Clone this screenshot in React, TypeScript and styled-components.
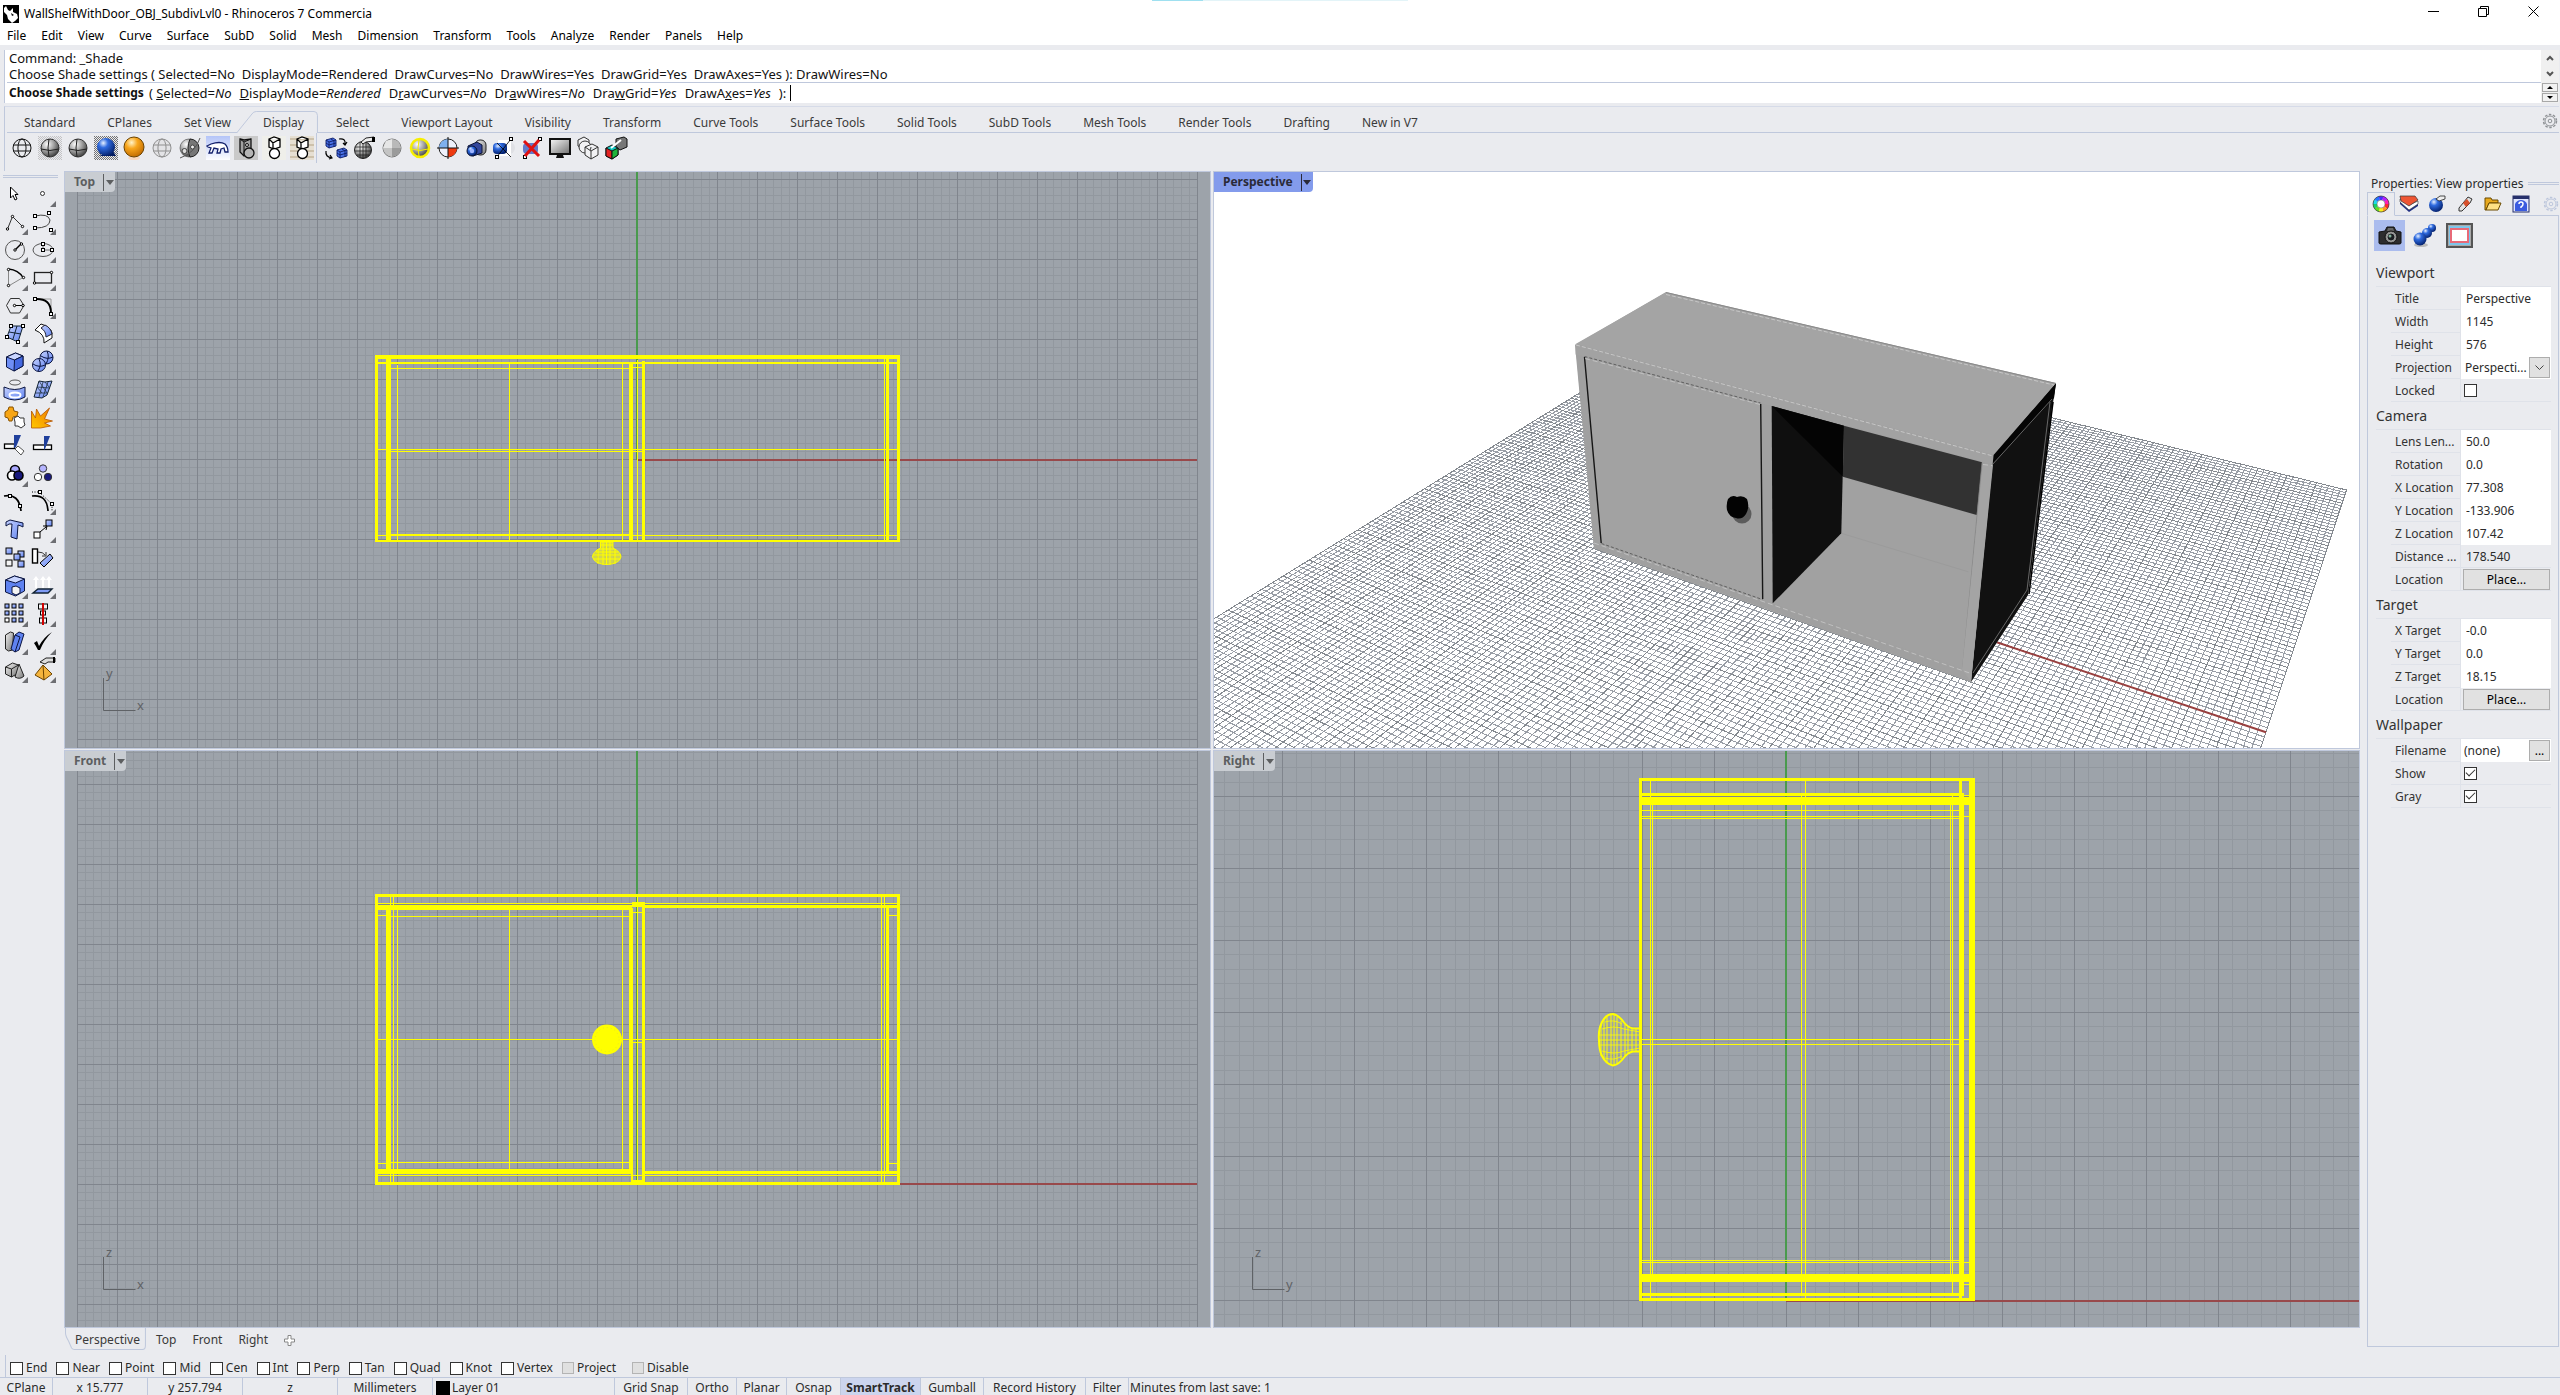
import React from "react";
import styled, { createGlobalStyle, css } from "styled-components";

const GlobalStyle = createGlobalStyle`
  *, *::before, *::after { box-sizing: border-box; }
  html, body { margin: 0; padding: 0; height: 100%; }
  body { overflow: hidden; background: #eaebef; }
  body, button, input, select {
    font-family: "Noto Sans", "Open Sans", sans-serif;
    font-size: 12px;
    line-height: 16px;
    color: #2b2b2b;
  }
  button { margin: 0; padding: 0; border: 0; background: none; }
  svg { display: block; }
`;

const LINE = "#bfc8dc";

/* ---------- frame ---------- */

const Window = styled.div`
  display: flex;
  flex-direction: column;
  height: 100vh;
  background: #eaebef;
  white-space: nowrap;
`;

const TitleBar = styled.header`
  position: relative;
  display: flex;
  align-items: center;
  height: 27px;
  padding: 0 2px 0 3px;
  background: #fff;
  color: #000;
`;

const TitleText = styled.h1`
  flex: 1;
  margin: 0 0 0 5px;
  font-size: 12px;
  font-weight: 400;
  line-height: 16px;
`;

const ShareStrip = styled.span`
  position: absolute;
  top: 0;
  left: 45%;
  width: 10%;
  height: 1px;
  background: linear-gradient(90deg, #9fe0f0 20%, #e3f4f8 20%);
`;

const CaptionButton = styled.button`
  display: grid;
  align-self: flex-start;
  place-items: center;
  width: 50px;
  height: 22px;
`;

const MenuBar = styled.nav`
  display: flex;
  height: 18px;
  background: #fff;
`;

const MenuItem = styled.button`
  padding: 0 8px 0 7px;
  color: #000;
`;

/* ---------- command area ---------- */

const CommandArea = styled.section`
  display: grid;
  grid-template-columns: 1fr 18px;
  height: 53px;
  margin: 5px 1px 0 4px;
  padding-left: 2px;
  border-left: 1px solid ${LINE};
  background: #fff;
  color: #111;
`;

const CommandText = styled.div`
  display: flex;
  flex-direction: column;
`;

const History = styled.div`
  height: 33px;
  padding-left: 2px;
  border-bottom: 1px solid ${LINE};
  font-size: 13px;
  p { margin: 0; line-height: 16px; }
`;

const Prompt = styled.div`
  display: flex;
  align-items: center;
  height: 20px;
  padding-left: 2px;
  font-size: 13px;
  b { margin-right: 5px; font-size: 12px; }
`;

const PromptOption = styled.button`
  margin-right: 8px;
  color: inherit;
  font-size: 13px;
`;

const PromptLabel = styled.label`
  display: flex;
  align-items: center;
`;

const PromptInput = styled.input`
  width: 200px;
  height: 16px;
  margin-left: 4px;
  padding: 0;
  border: 0;
  border-left: 1px solid #000;
  outline: 0;
`;

const CommandScroll = styled.div`
  display: flex;
  flex-direction: column;
  background: #f0f0f0;
`;

const ScrollButton = styled.button`
  display: grid;
  place-items: center;
  height: 16px;
`;

const SpinButton = styled.button`
  display: grid;
  place-items: center;
  height: 9px;
  margin: 1px 1px 0 1px;
  border: 1px solid #a8a8a8;
  background: #f2f2f2;
`;

/* ---------- toolbar tabs ---------- */

const ToolbarArea = styled.section`
  height: 65px;
  margin: 3px 1px 0 4px;
  padding-left: 2px;
  border-top: 1px solid #d6dbe8;
  border-left: 1px solid ${LINE};
`;

const TabStrip = styled.div`
  position: relative;
  display: flex;
  align-items: flex-end;
  height: 26px;
  padding-left: 17px;
  border-bottom: 1px solid ${LINE};
`;

const ToolTab = styled.button<{ $active?: boolean }>`
  position: relative;
  height: 21px;
  margin-right: 32px;
  padding-top: 2px;
  color: #3a3a3a;
  z-index: 1;
`;

const ActiveTabShape = styled.svg`
  position: absolute;
  z-index: -1;
  left: -26px;
  bottom: -1px;
  width: calc(100% + 40px);
  height: 22px;
`;

const TabSettings = styled.button`
  margin: 0 1px 3px auto;
`;

const ToolRow = styled.div`
  display: flex;
  align-items: center;
  height: 30px;
  padding-left: 1px;
`;

const ToolButton = styled.button`
  width: 28px;
  height: 28px;
  display: grid;
  place-items: center;
`;

const ToolDivider = styled.span`
  width: 6px;
  height: 30px;
  border-left: 1px solid ${LINE};
`;

/* ---------- workspace ---------- */

const Workspace = styled.main`
  flex: 1;
  min-height: 0;
  display: grid;
  grid-template-columns: 64px minmax(0, 1fr) 200px;
`;

const SideTools = styled.aside`
  padding-top: 4px;
`;

const Grip = styled.div`
  height: 3px;
  margin: 0 6px 1px 3px;
  border: solid ${LINE};
  border-width: 1px 0;
`;

const SideGrid = styled.div`
  display: grid;
  grid-template-columns: 28px 28px;
`;

const Center = styled.div`
  display: flex;
  flex-direction: column;
  min-width: 0;
  min-height: 0;
`;

const Viewports = styled.div`
  flex: 1;
  min-height: 0;
  display: grid;
  grid-template-columns: 1fr 1fr;
  grid-template-rows: 1fr 1fr;
  gap: 1px 2px;
`;

const Pane = styled.section<{ $white?: boolean }>`
  position: relative;
  min-width: 0;
  min-height: 0;
  border: 1px solid ${LINE};
  background: ${(p) => (p.$white ? "#fff" : "#9da3aa")};
`;

const Scene = styled.svg`
  width: 100%;
  height: 100%;
  font-family: "Noto Sans", sans-serif;
`;

const PaneTitle = styled.button<{ $active?: boolean }>`
  position: absolute;
  left: 0;
  top: 0;
  display: flex;
  align-items: center;
  height: 20px;
  padding-left: 9px;
  border-bottom-right-radius: 4px;
  background: ${(p) => (p.$active ? "#839bec" : "#c9cdd2")};
  color: ${(p) => (p.$active ? "#2a2a38" : "#5c5e60")};
  font-weight: 700;
`;

const PaneArrow = styled.span`
  display: grid;
  place-items: center;
  width: 12px;
  height: 17px;
  margin-left: 8px;
  border-left: 1px solid currentColor;
`;

const PaneTabs = styled.div`
  position: relative;
  display: flex;
  align-items: center;
  height: 27px;
  padding: 0 0 3px 1px;
`;

const PaneTab = styled.button`
  position: relative;
  padding: 0 6px 0 10px;
  color: #3a3a3a;
`;

const PaneTabShape = styled.svg`
  position: absolute;
  left: 0;
  top: -4px;
  width: 100%;
  height: 22px;
`;

/* ---------- properties ---------- */

const Properties = styled.aside`
  display: flex;
  flex-direction: column;
  padding: 4px 1px 8px 7px;
`;

const PanelTitle = styled.h2`
  display: flex;
  align-items: center;
  gap: 5px;
  height: 17px;
  margin: 0 0 0 4px;
  font-size: 12px;
  font-weight: 400;
  line-height: 16px;
  &::after {
    content: "";
    flex: 1;
    height: 3px;
    border: solid ${LINE};
    border-width: 1px 0;
  }
`;

const PanelTabs = styled.div`
  display: flex;
  height: 24px;
`;

const PanelTab = styled.button<{ $active?: boolean }>`
  display: grid;
  place-items: center;
  width: 28px;
  border-bottom: 1px solid ${LINE};
  ${(p) =>
    p.$active &&
    css`
      border: 1px solid ${LINE};
      border-bottom-color: transparent;
    `}
`;

const PanelTabEnd = styled.div`
  flex: 1;
  display: flex;
  justify-content: flex-end;
  align-items: center;
  border-bottom: 1px solid ${LINE};
`;

const PanelBody = styled.div`
  flex: 1;
  padding: 4px 7px 0 8px;
  border: solid ${LINE};
  border-width: 0 1px 1px 1px;
`;

const PageButtons = styled.div`
  display: flex;
  gap: 4px;
  padding: 0 0 7px 0;
  margin-left: -2px;
`;

const PageButton = styled.button<{ $active?: boolean }>`
  display: grid;
  place-items: center;
  width: 31px;
  height: 31px;
  background: ${(p) => (p.$active ? "#abbcee" : "transparent")};
`;

const SectionTitle = styled.h3`
  margin: 0;
  height: 28px;
  font-size: 14px;
  font-weight: 400;
  line-height: 29px;
  color: #333;
`;

const Rows = styled.div`
  border-top: 1px solid #dfe2e9;
  margin-bottom: -1px;
`;

const Row = styled.div`
  display: grid;
  grid-template-columns: 70px minmax(0, 1fr);
  height: 23px;
  margin-left: 15px;
  border-bottom: 1px solid #dfe2e9;
`;

const RowLabel = styled.label`
  padding-left: 4px;
  line-height: 23px;
  border-right: 1px solid #dfe2e9;
  color: #333;
`;

const RowValue = styled.div<{ $plain?: boolean }>`
  display: flex;
  align-items: center;
  min-width: 0;
  background: ${(p) => (p.$plain ? "transparent" : "#fff")};
`;

const Field = styled.input<{ $tight?: boolean }>`
  flex: 1;
  min-width: 0;
  height: 22px;
  padding: 0 0 0 ${(p) => (p.$tight ? 3 : 5)}px;
  border: 0;
  outline: 0;
  background: transparent;
`;

const Choice = styled.select`
  flex: 1;
  min-width: 0;
  height: 22px;
  padding: 0 0 0 4px;
  border: 0;
  outline: 0;
  appearance: none;
  background: transparent;
`;

const PlaceButton = styled.button`
  flex: 1;
  height: 21px;
  margin: 0 1px 0 2px;
  border: 1px solid #adadad;
  background: #e1e1e1;
  color: #000;
`;

const SmallButton = styled.button`
  display: grid;
  place-items: center;
  width: 21px;
  height: 21px;
  margin-right: 1px;
  border: 1px solid #adadad;
  background: #e1e1e1;
  color: #000;
`;

const CheckBox = styled.input`
  appearance: none;
  position: relative;
  width: 13px;
  height: 13px;
  margin: 0;
  border: 1px solid #333;
  background: #fff;
  &:disabled {
    width: 12px;
    height: 12px;
    border-color: #b4b4b4;
    background: #e0e0e0;
  }
  &:checked::after {
    content: "";
    position: absolute;
    left: 1px;
    top: 1px;
    width: 9px;
    height: 5px;
    border: solid #333;
    border-width: 0 0 1px 1px;
    transform: rotate(-45deg);
  }
`;

/* ---------- bottom bars ---------- */

const OsnapBar = styled.section`
  display: flex;
  align-items: center;
  height: 22px;
  padding: 4px 0 0 4px;
  margin-left: 5px;
  border-left: 1px solid ${LINE};
`;

const Osnap = styled.label<{ $wide?: boolean }>`
  display: flex;
  align-items: center;
  gap: 3px;
  margin-right: ${(p) => (p.$wide ? 16 : 9)}px;
`;

const StatusBar = styled.footer`
  display: flex;
  height: 18px;
  border-top: 1px solid ${LINE};
`;

const StatusCell = styled.button<{ $w: number; $on?: boolean; $left?: boolean }>`
  display: flex;
  align-items: center;
  justify-content: ${(p) => (p.$left ? "flex-start" : "center")};
  gap: 2px;
  width: ${(p) => p.$w}px;
  padding: 3px 0 0 ${(p) => (p.$left ? 3 : 0)}px;
  border-right: 1px solid ${LINE};
  background: ${(p) => (p.$on ? "#ccd5ee" : "transparent")};
  font-weight: ${(p) => (p.$on ? 700 : 400)};
`;

const StatusNote = styled.span`
  padding: 2px 0 0 1px;
`;

const Swatch = styled.span`
  width: 14px;
  height: 14px;
  background: #000;
`;

const Hidden = styled.svg`
  position: absolute;
  width: 0;
  height: 0;
`;

/* ---------- shared gradients ---------- */

const Gradients = () => (
  <Hidden aria-hidden="true">
    <defs>
      <radialGradient id="gGray" cx="35%" cy="30%" r="75%">
        <stop offset="0" stopColor="#fff" />
        <stop offset=".5" stopColor="#a0a0a0" />
        <stop offset="1" stopColor="#3a3a3a" />
      </radialGradient>
      <radialGradient id="gBlue" cx="35%" cy="28%" r="75%">
        <stop offset="0" stopColor="#e6f0ff" />
        <stop offset=".35" stopColor="#2f6be0" />
        <stop offset="1" stopColor="#03206c" />
      </radialGradient>
      <radialGradient id="gOrange" cx="38%" cy="28%" r="75%">
        <stop offset="0" stopColor="#fff3c8" />
        <stop offset=".4" stopColor="#f8a61c" />
        <stop offset="1" stopColor="#c06a00" />
      </radialGradient>
      <linearGradient id="gSoft" x1="0" y1="0" x2="1" y2="1">
        <stop offset="0" stopColor="#c6d2ff" />
        <stop offset="1" stopColor="#5f82f0" />
      </linearGradient>
      <linearGradient id="gSky" x1="0" y1="0" x2="0" y2="1">
        <stop offset="0" stopColor="#b4c4f8" />
        <stop offset="1" stopColor="#fdfdff" />
      </linearGradient>
      <linearGradient id="gSteel" x1="0" y1="0" x2="1" y2="1">
        <stop offset="0" stopColor="#f2f2f2" />
        <stop offset="1" stopColor="#777" />
      </linearGradient>
      <linearGradient id="gFlame" x1="0" y1="1" x2="1" y2="0">
        <stop offset="0" stopColor="#ffc800" />
        <stop offset="1" stopColor="#f07800" />
      </linearGradient>
      <pattern id="pDots" width="2" height="2" patternUnits="userSpaceOnUse">
        <rect width="1" height="1" fill="#a9a9a9" />
        <rect x="1" y="1" width="1" height="1" fill="#a9a9a9" />
      </pattern>
      <pattern id="pDotsDark" width="2" height="2" patternUnits="userSpaceOnUse">
        <rect width="1" height="1" fill="#555" />
        <rect x="1" y="1" width="1" height="1" fill="#555" />
      </pattern>
    </defs>
  </Hidden>
);

/* ---------- icon helpers ---------- */

const Globe = ({ fill = "none", stroke = "#111", r = 9, cx = 12, cy = 12 }) => (
  <g fill="none" stroke={stroke}>
    <circle cx={cx} cy={cy} r={r} fill={fill} />
    <ellipse cx={cx} cy={cy} rx={r * 0.45} ry={r} />
    <path d={`M${cx - r} ${cy - 3}h${2 * r}M${cx - r} ${cy + 3}h${2 * r}`} />
  </g>
);

const HalfSphere = ({ cx = 12, cy = 12, r = 9 }) => (
  <g>
    <circle cx={cx} cy={cy} r={r} fill="url(#gGray)" stroke="#333" />
    <path d={`M${cx - r} ${cy + 1}q${r} 3 ${2 * r} 0M${cx - 1} ${cy - r}q-2 ${r} 0 ${2 * r}`} fill="none" stroke="#222" />
  </g>
);

const Node = ({ x, y, s = 3 }: { x: number; y: number; s?: number }) => (
  <rect x={x - s / 2} y={y - s / 2} width={s} height={s} fill="#fff" stroke="#000" />
);

const Dot = ({ x, y }: { x: number; y: number }) => <circle cx={x} cy={y} r="1.2" fill="#fff" stroke="#000" />;

const BoxOverCircle = () => (
  <g fill="none" stroke="#000" strokeWidth="1.3">
    <path d="M7 3l5-2 6 2v8l-6 2-5-2zM7 3l4 4 7-4M11 7v5" fill="#fff" />
    <circle cx="12.5" cy="17.500" r="5" fill="#fff" />
  </g>
);

const MiniCube = ({ x, y }: { x: number; y: number }) => (
  <g transform={`translate(${x} ${y})`} stroke="#0c1c66" strokeLinejoin="round" strokeWidth=".9">
    <path d="M1 3l7-2 3 2v6l-7 2-3-2z" fill="#4a72e8" />
    <path d="M1 3l3 2 7-2M4 5v6M1 6l3 2 7-2M6 2l3 2v6" fill="none" />
  </g>
);

/* ---------- display toolbar, 24 x 24 drawings ---------- */

const displayIcons: [string, React.ReactNode][] = [
  ["Wireframe", <Globe />],
  ["Shaded", <><rect width="24" height="24" fill="url(#pDots)" opacity=".6" /><HalfSphere /></>],
  ["Shade", <HalfSphere />],
  ["Rendered", <><rect width="24" height="24" fill="url(#pDotsDark)" opacity=".8" /><path d="M5 20h17l-3-5z" fill="#001a60" /><circle cx="12" cy="11" r="9" fill="url(#gBlue)" /></>],
  ["Raytraced", <><ellipse cx="12" cy="22" rx="6" ry="2" fill="#f9d9c0" /><circle cx="12" cy="11" r="10" fill="url(#gOrange)" stroke="#6b4300" /></>],
  ["Ghosted", <Globe stroke="#8f8f8f" fill="#e3e3e6" />],
  ["X-ray", <><circle cx="11" cy="12" r="9" fill="url(#gGray)" stroke="#555" strokeWidth=".7" /><path d="M12 3a9 9 0 0 1 0 18q-4-9 0-18z" fill="#777" stroke="#222" /><circle cx="6.500" cy="15" r="2.500" fill="#ddd" stroke="#444" /><circle cx="14.500" cy="11" r="2" fill="#eee" stroke="#444" /><path d="M2 22Q17 17 22 2" fill="none" stroke="#555" /></>],
  ["Arctic", <><rect width="24" height="24" fill="url(#gSky)" /><path d="M1 10l4-2q9-3 14 0 3 3 3 8h-3l-1-4-3 1-1 4h-3l1-4-4-1-2 5H3l2-5-3-1z" fill="#fff" stroke="#13206c" strokeWidth="1.3" /></>],
  ["Technical", <><rect width="24" height="24" fill="#c9c9c9" /><path d="M6 3l4 1 7-1v13l-7 4-4-4z" fill="#a2a2a2" stroke="#111" strokeWidth="1.3" /><path d="M6 3l4 3v13M10 6l7-3" fill="none" stroke="#111" /><circle cx="15" cy="17" r="5" fill="#b5b5b5" stroke="#111" strokeWidth="1.3" /><circle cx="13" cy="9" r="1.5" fill="#ddd" stroke="#111" /></>],
  ["Artistic", <><rect width="24" height="24" fill="#efefea" /><BoxOverCircle /></>],
  ["Pen", <><rect width="24" height="24" fill="#e6dfd2" /><path d="M0 3h24M0 9h24M0 15h24M0 21h24" stroke="#cdc1ab" strokeWidth="2" /><BoxOverCircle /></>],
];

const shadeIcons: [string, React.ReactNode][] = [
  ["Synchronize display", <><MiniCube x={1} y={1} /><MiniCube x={12} y={11} /><path d="M15 3q7-1 6 5M19 7l2 2 2-3M2 15q-1 6 6 7M6 19l2 3-3 1" fill="none" stroke="#000" strokeWidth="1.2" /></>],
  ["Mesh settings", <><circle cx="11" cy="14" r="8.5" fill="url(#gGray)" stroke="#222" /><path d="M3 11h16M3 15h16M5 19h12M8 6v16M14 6v16M11 6v17" stroke="#222" strokeWidth=".8" /><path d="M9 6l5-4 8-1v4l-8 1-3 2z" fill="#eee" stroke="#222" /><path d="M20 1h3v5h-3z" fill="#000" /></>],
  ["Flat shade", <><circle cx="12" cy="12" r="9" fill="#b5b5b5" stroke="#777" /><path d="M6 5l6-2v9H3z" fill="#e6e6e6" /><path d="M12 12h9l-2 6-7 3z" fill="#9b9b9b" /><path d="M3 12h9v9q-8-2-9-9z" fill="#c4c4c4" /><path d="M12 3q8 1 9 9h-9z" fill="#b9b9b9" /></>],
  ["Shade selected", <><circle cx="12" cy="12" r="9" fill="url(#gGray)" stroke="#f6ee00" strokeWidth="2.5" /><path d="M4 13q8 3 16 0M11 4q-2 8 0 16" fill="none" stroke="#f6ee00" /></>],
  ["Clipping plane", <><circle cx="12" cy="12" r="9" fill="#eef1fb" stroke="#222" /><path d="M12 12V3a9 9 0 0 0-9 9z" fill="#7fb0ee" /><path d="M12 12v9a9 9 0 0 0 9-9z" fill="#ee3a10" /><path d="M12 1v22M1 12h22" stroke="#111" /></>],
  ["Capture view", <><rect x="11" y="4" width="11" height="15" rx="5" fill="url(#gSteel)" stroke="#222" /><path d="M4 10l9-4 5 3v8l-9 3-5-3z" fill="#34479c" stroke="#0b1335" /><circle cx="8" cy="15" r="5" fill="url(#gBlue)" stroke="#0b1335" /><circle cx="8" cy="15" r="2.2" fill="#9fb5ff" /></>],
  ["Clip on", <><circle cx="17" cy="12" r="6" fill="#dfe0e4" /><path d="M6 4h13v16H6z" fill="#fff" /><rect x="1" y="7" width="14" height="11" rx="4" fill="url(#gBlue)" /><path d="M4 22L19 3M5 7l14 14" stroke="#000" strokeWidth=".8" /><Node x={19} y={3} /><Node x={5} y={21} /></>],
  ["Clip off", <><rect x="3" y="7" width="15" height="11" rx="4" fill="#6279c9" /><path d="M4 22L20 2" stroke="#000" /><Node x={20} y={3} /><Node x={5} y={21} /><path d="M4 5l15 15M19 4L5 20" stroke="#e01010" strokeWidth="3" /></>],
  ["Full screen", <><rect x="1" y="2" width="22" height="17" fill="#111" /><rect x="3" y="4" width="18" height="13" fill="url(#gSteel)" /><path d="M9 19h6l1 3H8z" fill="#111" /></>],
  ["Draw order", <g fill="#f2f2f4" stroke="#333"><path d="M2 4l6-3 5 3v6l-5 3-6-3z" /><circle cx="9" cy="11" r="6" /><path d="M9 11l7-3 6 3v8l-7 4-6-4zM9 11l6 4 7-4M15 15v8" /></g>],
  ["Object display", <><path d="M12 3l8-2 3 2v8l-7 3-4-3z" fill="#777" stroke="#111" /><path d="M2 12l6-3 6 3v7l-6 4-6-3z" fill="#10c7c0" stroke="#111" /><path d="M2 12l6 3v8l-6-3z" fill="#e32222" stroke="#111" /><path d="M8 15l6-3v7l-6 4z" fill="#1fb43a" stroke="#111" /><path d="M7 12L17 4" stroke="#fff" strokeWidth="2" /></>],
];

/* ---------- side toolbar, 28 x 28 drawings ---------- */

type Side = [string, boolean, React.ReactNode];

const sq = (x: number, y: number, f = "url(#gSoft)", s = 6) => (
  <rect key={`${x}-${y}`} x={x} y={y} width={s} height={s} fill={f} stroke="#000" />
);

const sideIcons: Side[] = [
  ["Select", false, <path d="M10.500 8v11l2.500-2.500 2 4.500 2-1-2-4.500h3z" fill="#fff" stroke="#000" />],
  ["Point", true, <circle cx="14.500" cy="14.500" r="2" fill="#fff" stroke="#333" />],
  ["Polyline", true, <><path d="M7.500 22L12.500 9.500 22.500 19.500" fill="none" stroke="#333" /><Dot x={7.5} y={22} /><Dot x={12.5} y={9.5} /><Dot x={22.5} y={19.500} /></>],
  ["Curve", true, <><path d="M7 9q13-3 15 4 0 8-15 8" fill="none" stroke="#444" /><Node x={7} y={9} /><Node x={21} y={6} /><Node x={7} y={21} /><Node x={23} y={23} /></>],
  ["Circle", true, <><circle cx="15" cy="15" r="9.500" fill="none" stroke="#555" /><path d="M15 15l6-6" stroke="#000" strokeWidth="1.500" /><Dot x={15} y={15} /><Dot x={21.5} y={9} /></>],
  ["Ellipse", true, <><ellipse cx="15" cy="15" rx="10" ry="6.500" fill="none" stroke="#555" /><path d="M15 9v6h9" fill="none" stroke="#666" /><Node x={15} y={9} /><Node x={15} y={15} /><Node x={24} y={15} /></>],
  ["Arc", true, <><path d="M8.500 6v17L23 14.500" fill="none" stroke="#888" /><path d="M8.500 6q10 1 14.500 8.500" fill="none" stroke="#000" strokeWidth="1.400" /><Dot x={8.5} y={6.5} /><Dot x={8.5} y={22.500} /><Dot x={23.500} y={14.500} /></>],
  ["Rectangle", true, <><rect x="6.500" y="9.500" width="17" height="10.500" fill="none" stroke="#222" strokeWidth="1.300" /><Dot x={23.500} y={9.500} /><Dot x={6.500} y={20} /></>],
  ["Polygon", true, <><path d="M10.500 7.500h9l4.500 7-4.500 7.500h-9L6.500 14.500z" fill="none" stroke="#333" /><path d="M14.500 14.500h9" stroke="#000" /><Dot x={14.5} y={14.500} /><Dot x={23} y={14.500} /></>],
  ["Fillet", true, <><path d="M7 8h16v15" fill="none" stroke="#999" /><path d="M7 8q16-1 16 14" fill="none" stroke="#000" strokeWidth="2" /><Node x={7} y={8} /><Node x={23} y={23} /></>],
  ["Surface", true, <><path d="M11 7h12l-5 16-11-5z" fill="url(#gSoft)" stroke="#123" /><path d="M17 7l-4 13M9 13l12 2" stroke="#123" fill="none" /><Node x={11} y={7} /><Node x={23} y={7} /><Node x={7} y={18} /><Node x={18} y={23} /></>],
  ["Loft", true, <><path d="M7 11l6-6q10 3 11 9v5l-8 5q1-9-9-13z" fill="#fff" stroke="#111" /><path d="M13 9l4-3q6 3 7 9l-6 3q0-6-5-9z" fill="url(#gSoft)" stroke="#223" /></>],
  ["Box", true, <g stroke="#0a1440" strokeLinejoin="round"><path d="M6.500 10l9-4 7.500 3v10l-9 5-7.500-4z" fill="#6f8ff5" /><path d="M6.500 10l9-4 7.500 3-8.500 4z" fill="#c9d5ff" /><path d="M14.500 13L23 9v10l-9 5z" fill="#4468e0" /></g>],
  ["Boolean", true, <g fill="url(#gSoft)" stroke="#0a1440"><circle cx="18.500" cy="10.500" r="6.500" /><circle cx="11" cy="18" r="6.500" /><path d="M13 9q6 4 12 1M19 4q3 6-1 13M5 17q6 4 12 1M11 12q3 6-1 12" fill="none" /></g>],
  ["Project", true, <><ellipse cx="15" cy="7.500" rx="5.500" ry="2.500" fill="none" stroke="#555" /><path d="M4 12q11 5 21 0v10q-10 6-21 0z" fill="url(#gSoft)" stroke="#0a1440" /><ellipse cx="15" cy="20" rx="5.500" ry="2.500" fill="none" stroke="#fff" strokeWidth="2" /></>],
  ["Mesh", true, <><path d="M11 6l6 1 7-1-5 14-5 3-8-1z" fill="url(#gSoft)" stroke="#123" /><path d="M15 7l-4 15M20 7l-5 15M9 12l13 1M7 18l13 0M11 6l4 6M17 7l4 5M9 12l5 6M15 12l4 6" stroke="#234" strokeWidth=".8" fill="none" /></>],
  ["Join", false, <><path d="M5 9l3-2 1-3 4 0 1 4 4 1-1 4-4 1-1 4-3 0-1-3-3-1z" fill="#f7a514" stroke="#8a5300" /><path d="M14 15l4-2 2 2 4 0 0 4 1 3-4 3-3-2-3 0 0-4z" fill="#fff" stroke="#333" /></>],
  ["Explode", false, <path d="M3.500 8l4 7 1-9 4 7 9-8-5 11 8 2-8 2 6 3-10 2H3.500z" fill="url(#gFlame)" stroke="#b45500" strokeWidth=".8" />],
  ["Trim", false, <><rect x="4.500" y="13" width="10" height="4.500" fill="#fff" stroke="#000" strokeWidth="1.300" /><path d="M14 4h7l-5 12-2 1z" fill="#20409c" /><path d="M15 18l3-3 6 5-3 4z" fill="#fff" stroke="#555" /></>],
  ["Split", false, <><rect x="5.500" y="14" width="18" height="4.500" fill="#fff" stroke="#000" strokeWidth="1.300" /><path d="M16 5h6l-5 13-1 1z" fill="#20409c" /></>],
  ["Group", true, <g stroke="#000" strokeWidth="1.600"><circle cx="15" cy="11" r="4.500" fill="#a9a8ff" /><circle cx="12" cy="16.500" r="4.500" fill="#fff" /><circle cx="18.500" cy="16.500" r="4.500" fill="#19197c" /></g>],
  ["Ungroup", false, <g stroke="#333"><circle cx="15" cy="9.500" r="3.700" fill="#b5b4ff" /><circle cx="10" cy="18" r="3.700" fill="#fff" /><circle cx="20" cy="18" r="3.700" fill="#19197c" /></g>],
  ["Edit points", false, <><path d="M4 9q15-3 17 15" fill="none" stroke="#000" strokeWidth="1.700" /><Node x={10} y={9} /><Node x={20} y={19} /></>],
  ["Control points", true, <><path d="M4 9q15-2 16 15" fill="none" stroke="#000" strokeWidth="1.700" /><path d="M4 5h7l13 12v7" fill="none" stroke="#000" strokeDasharray="1 1.500" /><Node x={12} y={5} /><Node x={24} y={17} /></>],
  ["Text", false, <path d="M6 7l4-2 13 3v4l-2-1-3-1-1 14-6-2 1-13-3 0-3 2z" fill="url(#gSoft)" stroke="#0a1440" />],
  ["Move", true, <>{sq(18, 5)}{sq(6, 17, "#fff")}<path d="M12 17l6-5M15 11l4 0-1 4" fill="none" stroke="#000" /></>],
  ["Copy", false, <>{sq(6, 5)}{sq(18, 8)}{sq(14, 11)}{sq(6, 17, "#f4f4f4")}{sq(18, 18)}</>],
  ["Rotate", false, <><rect x="4.500" y="6" width="5" height="14" fill="#fff" stroke="#000" strokeWidth="1.400" /><path d="M10 9q5 0 7 3M18 9v4h-4" fill="none" stroke="#333" /><path d="M12 20l10-9 3 4-9 9z" fill="url(#gSoft)" stroke="#000" /></>],
  ["Solid edit", true, <g stroke="#0a1440" strokeLinejoin="round"><path d="M5.500 9l9-4 10 3v12l-9 5-10-4z" fill="#5f82f0" /><path d="M5.500 9l9-4 10 3-9 4z" fill="#c9d5ff" /><path d="M12 16l4-1 4 2v5l-4 2-4-2z" fill="#f4f4f4" /></g>],
  ["Extrude", true, <><path d="M8 17V8M15 17V8M21 17V8" stroke="#fff" strokeWidth="2" /><path d="M5 9l3-4 3 4zM12 9l3-4 3 4zM18 9l3-4 3 4z" fill="#fff" /><path d="M5 22l5-4h14l-4 4z" fill="#7f9bf5" stroke="#123" strokeWidth="1.400" /></>],
  ["Array", true, <>{[5, 12, 19].map((y) => [5, 12, 19].map((x) => sq(x, y, x === 5 && y === 19 ? "#fff" : "url(#gSoft)", 4)))}</>],
  ["Align", true, <><rect x="10.500" y="5" width="9" height="5" fill="#f4f4f4" stroke="#000" /><rect x="12.500" y="12" width="5" height="4" fill="#f4f4f4" stroke="#000" /><rect x="11.500" y="19" width="7" height="5" fill="#f4f4f4" stroke="#000" /><path d="M15 4v22" stroke="#d00000" strokeWidth="2" /></>],
  ["Bend", true, <><path d="M5.500 8l5-3 3 1-1 17-4 1-3-2z" fill="url(#gSteel)" stroke="#222" /><path d="M15 8l4-3 5 2-5 16-4 2-4-3z" fill="#5f82f0" stroke="#0a1440" /><path d="M15 8l5 2-5 15" fill="none" stroke="#0a1440" /></>],
  ["Check", true, <path d="M6 16l3-2 2 5Q16 10 24 5 16 13 12 23l-2 0q-2-4-4-7z" fill="#000" />],
  ["Primitives", true, <g stroke="#222"><path d="M5.500 12l7-4 6 2v8l-7 4-6-3z" fill="url(#gSteel)" /><path d="M5.500 12l6 2 7-4M11.500 14v8" fill="none" /><path d="M19 9l5 12q-4 4-9 1z" fill="url(#gSteel)" /></g>],
  ["Render", true, <><path d="M7 20l8-10 9 9-8 6z" fill="#f5b43c" stroke="#6b4300" /><path d="M15 10l1 15" stroke="#6b4300" /><path d="M12 7l6-4h9v4h-7l-3 2z" fill="#ddd" stroke="#222" /><path d="M25 2h2v6h-2z" fill="#000" /></>],
];

/* ---------- panel icons ---------- */

const Gear = ({ color = "#8f9296" }) => (
  <svg width="16" height="16" viewBox="0 0 16 16" fill="none" stroke={color}>
    <circle cx="8" cy="8" r="6.500" strokeWidth="1.500" strokeDasharray="2.500 1.600" />
    <circle cx="8" cy="8" r="5" />
    <circle cx="8" cy="8" r="1.800" />
  </svg>
);

const hues = ["#ff2b2b", "#ff9a1f", "#f8f01c", "#62dc1f", "#17d06a", "#1fd7e8", "#2372ff", "#4a2bff", "#b21fff", "#ff1fb4"];

const ColorRing = () => (
  <svg width="18" height="18" viewBox="0 0 18 18">
    {hues.map((c, i) => (
      <circle key={c} cx="9" cy="9" r="6" fill="none" stroke={c} strokeWidth="4" pathLength={100} strokeDasharray="10.500 89.500" strokeDashoffset={-i * 10} />
    ))}
    <circle cx="9" cy="9" r="8" fill="none" stroke="#333" strokeWidth=".7" />
    <circle cx="9" cy="9" r="4" fill="#fff" stroke="#555" strokeWidth=".5" />
  </svg>
);

const panelTabs: [string, React.ReactNode][] = [
  ["Properties", <ColorRing />],
  ["Layers", <svg width="20" height="18" viewBox="0 0 20 18"><path d="M1 6l9 6 9-5v4l-9 6-9-8z" fill="#1f2f85" /><path d="M1 4l9 6 9-4v3l-9 6-9-8z" fill="#fff" stroke="#333" strokeWidth=".6" /><path d="M1 1l15 0 3 4-9 6-8-5z" fill="#ee5533" stroke="#333" strokeWidth=".7" /></svg>],
  ["Display", <svg width="18" height="18" viewBox="0 0 18 18"><circle cx="8" cy="10" r="7" fill="url(#gBlue)" /><path d="M8 4l4-3h5v3l-6 2z" fill="#eee" stroke="#222" strokeWidth=".8" /></svg>],
  ["Materials", <svg width="18" height="18" viewBox="0 0 18 18"><path d="M3 13l9-11 4 2-2 4-8 8-3 0z" fill="#e3e3e3" stroke="#333" /><path d="M7 8l4-4 3 4-4 4z" fill="#d9512c" /></svg>],
  ["Libraries", <svg width="18" height="18" viewBox="0 0 18 18"><path d="M1 3h6l1 2h6v3H5l-3 7H1z" fill="#e8a91d" stroke="#6b4a00" /><path d="M5 8h12l-3 7H2z" fill="#ffe184" stroke="#6b4a00" /></svg>],
  ["Help", <svg width="18" height="18" viewBox="0 0 18 18"><rect x="1" y="1" width="16" height="16" fill="#dfe5ff" stroke="#26306b" /><path d="M1 1h16v3H1z" fill="#26306b" /><path d="M3 16V9q2-4 6-4t6 4v7z" fill="#3b5be0" /><path d="M7 9q0-2 2-2t2 2-2 3v1" fill="none" stroke="#fff" strokeWidth="1.500" /></svg>],
];

/* ---------- scene drawing ---------- */

type Box4 = [number, number, number, number];

const cells = (
  x: number, y: number, step: number,
  x0: number, x1: number, y0: number, y1: number,
) => {
  let minor = "";
  let major = "";
  const div = step / 5;
  const first = Math.ceil((x0 - x) / div);
  const last = Math.floor((x1 - x) / div);
  for (let i = first; i <= last; i++) {
    const s = `M${Math.round(x + i * div) + 0.5} ${y0}V${y1}`;
    i % 5 ? (minor += s) : (major += s);
  }
  for (let i = Math.ceil((y0 - y) / div); i <= Math.floor((y1 - y) / div); i++) {
    const s = `M${x0} ${Math.round(y + i * div) + 0.5}H${x1 + 1}`;
    i % 5 ? (minor += s) : (major += s);
  }
  return { minor, major };
};

const Cells = (p: { x: number; y: number; step: number; area: Box4 }) => {
  const { minor, major } = cells(p.x, p.y, p.step, ...p.area);
  return (
    <g shapeRendering="crispEdges" fill="none">
      <path d={minor} stroke="#92989f" />
      <path d={major} stroke="#80858d" />
    </g>
  );
};

/* horizontal and vertical strokes: start, end, position, thickness */
const Strokes = ({ h, v }: { h: Box4[]; v: Box4[] }) => (
  <path
    fill="#ff0"
    shapeRendering="crispEdges"
    d={
      h.map(([a, b, y, t]) => `M${a} ${y}H${b}v${t}H${a}z`).join("") +
      v.map(([a, b, x, t]) => `M${x} ${a}h${t}V${b}H${x}z`).join("")
    }
  />
);

const AxisIcon = ({ x, y, up, right }: { x: number; y: number; up: string; right: string }) => (
  <g fill="#5f6266" fontSize="13">
    <path d={`M${x + 0.5} ${y - 32}v32.500h32`} fill="none" stroke="#5f6266" />
    <text x={x + 3} y={y - 32}>{up}</text>
    <text x={x + 34} y={y}>{right}</text>
  </g>
);

const TopScene = () => (
  <Scene viewBox="65 172 1145 576" preserveAspectRatio="xMidYMid slice">
    <Cells x={637} y={459.4} step={40} area={[77, 1197, 172, 748]} />
    <path d="M636 172h2v288h-2z" fill="#4a9a4e" />
    <path d="M637 459h560v2H637z" fill="#98494b" />
    <Strokes
      h={[
        [375, 900, 355, 4], [375, 900, 362, 2], [391, 630, 368, 1], [633, 642, 367, 1],
        [378, 897, 449, 1], [391, 642, 451, 1], [391, 630, 534, 2], [633, 897, 535, 1],
        [378, 386, 535, 1], [375, 900, 540, 2],
      ]}
      v={[
        [355, 542, 375, 3], [359, 541, 386, 5], [365, 541, 397, 1], [364, 541, 509, 1],
        [364, 541, 622, 1], [362, 541, 629, 4], [360, 541, 637, 1], [361, 541, 642, 3],
        [359, 541, 884, 1], [359, 541, 886, 3], [355, 542, 897, 3],
      ]}
    />
    <g stroke="#ff0" fill="none">
      <path d="M600.500 542v6q-8 4-8 9 2 7 14 7.500 13-.5 14.500-7.500 0-5-8-9v-6z" fill="#ff0" fillOpacity=".55" />
      <path d="M593 555h28M594 559h26M596 552h22M599 549h15M600 545h13M603 542v23M610 542v23M606.500 542v23M598 549v15M615 549v15" />
    </g>
    <AxisIcon x={103} y={710} up="y" right="x" />
  </Scene>
);

const FrontScene = () => (
  <Scene viewBox="65 751 1145 576" preserveAspectRatio="xMidYMid slice">
    <Cells x={637} y={1184} step={40} area={[77, 1197, 751, 1327]} />
    <path d="M636 751h2v433h-2z" fill="#4a9a4e" />
    <path d="M637 1183h560v2H637z" fill="#98494b" />
    <Strokes
      h={[
        [375, 900, 894, 3], [378, 897, 903, 1], [375, 632, 905, 5], [642, 900, 905, 3],
        [391, 630, 916, 1], [378, 386, 915, 1], [889, 897, 915, 1], [633, 642, 912, 1],
        [632, 644, 902, 5], [378, 897, 1039, 1], [633, 642, 1042, 1], [391, 630, 1162, 1],
        [378, 386, 1163, 1], [889, 897, 1163, 1], [375, 632, 1169, 5], [642, 900, 1171, 3],
        [378, 897, 1175, 1], [375, 900, 1182, 3], [631, 644, 1180, 2],
      ]}
      v={[
        [894, 1185, 375, 3], [908, 1170, 386, 5], [897, 905, 390, 1], [1174, 1182, 390, 1],
        [897, 1182, 393, 1], [908, 1170, 397, 1], [908, 1170, 509, 1], [908, 1170, 622, 1],
        [908, 1170, 629, 4], [1170, 1182, 631, 2], [897, 1182, 637, 1], [902, 1182, 642, 3],
        [897, 1182, 881, 1], [897, 1182, 884, 1], [908, 1172, 886, 3], [894, 1185, 897, 3],
      ]}
    />
    <circle cx="607" cy="1039.500" r="15" fill="#ff0" />
    <circle cx="607" cy="1039.500" r="12" fill="none" stroke="#d8d93a" strokeDasharray="1 3" strokeWidth=".6" />
    <AxisIcon x={103} y={1289} up="z" right="x" />
  </Scene>
);

const RightScene = () => (
  <Scene viewBox="1214 751 1145 576" preserveAspectRatio="xMidYMid slice">
    <Cells x={1786} y={1300} step={72} area={[1214, 2359, 751, 1327]} />
    <path d="M1785 751h2v550h-2z" fill="#4a9a4e" />
    <path d="M1786 1300h573v2h-573z" fill="#98494b" />
    <Strokes
      h={[
        [1639, 1975, 778, 3], [1639, 1963, 793, 3], [1639, 1971, 797, 8], [1642, 1959, 810, 1],
        [1642, 1969, 816, 1], [1642, 1959, 818, 1], [1642, 1969, 1039, 1], [1642, 1959, 1044, 1],
        [1642, 1959, 1260, 1], [1642, 1969, 1262, 1], [1639, 1971, 1274, 8], [1639, 1963, 1293, 3],
        [1964, 1969, 1284, 1], [1964, 1969, 795, 1], [1639, 1975, 1298, 3],
      ]}
      v={[
        [778, 1301, 1639, 3], [781, 1298, 1650, 1], [805, 1274, 1652, 1], [796, 1293, 1801, 1],
        [781, 1298, 1805, 1], [805, 1274, 1950, 1], [796, 1293, 1952, 1], [793, 1296, 1959, 5],
        [778, 1300, 1959, 3], [778, 1301, 1969, 6],
      ]}
    />
    <g fill="none" stroke="#ff0">
      <path
        d="M1639 1028.500h-6q-5-1-9-6-6-8-11-8.500-7 0-11 8-4 8-3 18 0 10 3 16 4 8 11 9.500 6-1 11-8 4-5 9-6h6"
        strokeWidth="2"
      />
      <path d="M1601 1024v32M1604 1020v40M1607 1017v45M1611 1015v50M1614 1015v50M1617 1017v46M1621 1021v38M1625 1024v32M1628 1027v26M1632 1028v24M1636 1028v24" />
      <path d="M1599 1035h41M1599 1040h41M1599 1045h41M1602 1029q12-4 22 0l16 3M1602 1051q12 4 22 0l16-3M1605 1022q9-3 17 2M1605 1058q9 3 17-2" strokeWidth=".8" />
    </g>
    <AxisIcon x={1252} y={1289} up="z" right="y" />
  </Scene>
);

/* ground plane: maps the unit square onto the far half of the construction plane */
const ground = (() => {
  const [x0, y0] = [1465, 463.7];
  const [x1, y1] = [2266, 732.3];
  const [x2, y2] = [2346.5, 490];
  const [x3, y3] = [1685, 327.8];
  const sx = x0 - x1 + x2 - x3;
  const sy = y0 - y1 + y2 - y3;
  const [dx1, dx2, dy1, dy2] = [x1 - x2, x3 - x2, y1 - y2, y3 - y2];
  const det = dx1 * dy2 - dx2 * dy1;
  const g = (sx * dy2 - dx2 * sy) / det;
  const h = (dx1 * sy - sx * dy1) / det;
  return (u: number, v: number) => {
    const w = 1 + g * u + h * v;
    const x = ((x1 - x0 + g * x1) * u + (x3 - x0 + h * x3) * v + x0) / w;
    const y = ((y1 - y0 + g * y1) * u + (y3 - y0 + h * y3) * v + y0) / w;
    return `${x.toFixed(1)} ${y.toFixed(1)}`;
  };
})();

const groundLines = (major: boolean) => {
  let d = "";
  for (let i = -70; i <= 70; i++) {
    if ((i % 5 === 0) !== major) continue;
    d += `M${ground((i + 70) / 140, -1)}L${ground((i + 70) / 140, 1)}`;
    d += `M${ground(0, i / 70)}L${ground(1, i / 70)}`;
  }
  return d;
};

const PerspectiveScene = () => (
  <Scene viewBox="1214 172 1145 576" preserveAspectRatio="xMidYMid slice">
    <g fill="none" shapeRendering="crispEdges">
      <path d={groundLines(false)} stroke="#999ea6" />
      <path d={groundLines(true)} stroke="#84898f" />
    </g>
    <path d="M1990 640L2266 732.300" stroke="#98403f" strokeWidth="2" />
    <path d="M1575 345l91-53 390 91-28 212-57 87-377-134z" fill="#a0a0a0" />
    {/* end panel */}
    <path d="M1993 455l63-72-4 24-24 188-57 87z" fill="#111" />
    <path d="M1993 455l63-72-2 15-62 66z" fill="#050505" />
    <path d="M1992 465l60-66M2050 402l-23 188-54 83" fill="none" stroke="#8d8d8d" strokeWidth=".7" />
    <path d="M2053 402l-24 192" stroke="#000" strokeWidth="1.500" />
    {/* top board */}
    <path d="M1575.600 344l90-51.300 390 90.700-62 71.600z" fill="#a4a4a4" />
    <path d="M1575.600 344l418 111-1 9.500-417-110z" fill="#a2a2a2" />
    <path d="M1666 292.500l390 91" stroke="#8a8a8a" />
    <path d="M1666 294.500l388 90.500M1576 345l417 111" stroke="#c6c6c6" strokeDasharray="4 2" />
    {/* front frame */}
    <path d="M1576.500 355l416 109.500-21.500 217L1594 548.300z" fill="#a0a0a0" />
    {/* opening */}
    <path d="M1771.700 406l210 56.500-19.400 206-189.600-65z" fill="#a1a1a1" />
    <path d="M1771.700 406l72.200 19.700-2.600 107.600-68.600 70z" fill="#0f0f0f" />
    <path d="M1771.700 406l72.200 19.700-1 51z" fill="#040404" />
    <path d="M1843.900 425.700l138.100 36.600-5.300 52.700-133.900-38.300z" fill="#323232" />
    <path d="M1841.300 533.300l127 38.500" stroke="#9b9b9b" />
    <path d="M1982 462.500l-19.400 206" stroke="#828282" strokeWidth=".7" />
    <path d="M1983 464l10 1-22 217-9-13z" fill="#a4a4a4" />
    {/* door */}
    <path d="M1584.500 357l176.200 46.500 2 196-161.500-56z" fill="#a2a2a2" />
    <path d="M1584.500 357l16.700 186M1760.700 404l2 195" fill="none" stroke="#161616" strokeWidth="1.400" />
    <path d="M1584.500 356.500l176 46.500M1601.500 543.500l161 56" stroke="#444" strokeDasharray="3 2" strokeWidth=".7" />
    <path d="M1585 358.500l175 46M1594 543l377 130.500M1983 464.500l9 1" stroke="#c8c8c8" strokeDasharray="5 3" strokeWidth=".8" />
    <ellipse cx="1742" cy="514" rx="9.500" ry="9.500" fill="#4b4b4b" opacity=".8" />
    <path d="M1728 499q4-5 9-2 6-2 10 2 3 8-1 15-4 6-10 4-7-1-9-8-1-6 1-11z" fill="#030303" />
  </Scene>
);

const Viewport = ({ name, active, children }: { name: string; active?: boolean; children: React.ReactNode }) => (
  <Pane $white={active} aria-label={`${name} viewport`}>
    {children}
    <PaneTitle $active={active}>
      {name}
      <PaneArrow>
        <svg width="8" height="5" viewBox="0 0 8 5"><path d="M0 0h8L4 5z" fill="currentColor" /></svg>
      </PaneArrow>
    </PaneTitle>
  </Pane>
);

/* ---------- data ---------- */

const menus = ["File", "Edit", "View", "Curve", "Surface", "SubD", "Solid", "Mesh", "Dimension", "Transform", "Tools", "Analyze", "Render", "Panels", "Help"];

const tabs = ["Standard", "CPlanes", "Set View", "Display", "Select", "Viewport Layout", "Visibility", "Transform", "Curve Tools", "Surface Tools", "Solid Tools", "SubD Tools", "Mesh Tools", "Render Tools", "Drafting", "New in V7"];

const options: [string, string, string, string][] = [
  ["", "S", "elected", "No"],
  ["", "D", "isplayMode", "Rendered"],
  ["D", "r", "awCurves", "No"],
  ["Dr", "a", "wWires", "No"],
  ["Dra", "w", "Grid", "Yes"],
  ["DrawA", "x", "es", "Yes"],
];

type Kind = "text" | "plain" | "select" | "check" | "checked" | "place" | "file";

const sections: [string, [string, string, Kind][]][] = [
  ["Viewport", [
    ["Title", "Perspective", "text"], ["Width", "1145", "text"], ["Height", "576", "text"],
    ["Projection", "Perspecti...", "select"], ["Locked", "", "check"],
  ]],
  ["Camera", [
    ["Lens Len...", "50.0", "text"], ["Rotation", "0.0", "text"], ["X Location", "77.308", "text"],
    ["Y Location", "-133.906", "text"], ["Z Location", "107.42", "text"],
    ["Distance ...", "178.540", "plain"], ["Location", "Place...", "place"],
  ]],
  ["Target", [
    ["X Target", "-0.0", "text"], ["Y Target", "0.0", "text"], ["Z Target", "18.15", "text"],
    ["Location", "Place...", "place"],
  ]],
  ["Wallpaper", [["Filename", "(none)", "file"], ["Show", "", "checked"], ["Gray", "", "checked"]]],
];

const CheckCell = styled(RowValue)`
  padding-left: 3px;
`;

const PropertyRow = ({ id, label, value, kind }: { id: string; label: string; value: string; kind: Kind }) => {
  let cell: React.ReactNode;
  if (kind === "check" || kind === "checked")
    cell = <CheckCell $plain><CheckBox id={id} type="checkbox" defaultChecked={kind === "checked"} /></CheckCell>;
  else if (kind === "place")
    cell = <RowValue $plain><PlaceButton id={id}>{value}</PlaceButton></RowValue>;
  else if (kind === "select")
    cell = (
      <RowValue>
        <Choice id={id}><option>{value}</option></Choice>
        <SmallButton aria-label="Open list" tabIndex={-1}>
          <svg width="9" height="6" viewBox="0 0 9 6"><path d="M.5.500l4 4 4-4" fill="none" stroke="#444" /></svg>
        </SmallButton>
      </RowValue>
    );
  else if (kind === "file")
    cell = <RowValue><Field $tight id={id} defaultValue={value} /><SmallButton>...</SmallButton></RowValue>;
  else
    cell = <RowValue $plain={kind === "plain"}><Field id={id} defaultValue={value} readOnly={kind === "plain"} /></RowValue>;
  return <Row><RowLabel htmlFor={id}>{label}</RowLabel>{cell}</Row>;
};

const osnaps = ["End", "Near", "Point", "Mid", "Cen", "Int", "Perp", "Tan", "Quad", "Knot", "Vertex", "Project", "Disable"];

export default function App() {
  return (
    <Window>
      <GlobalStyle />
      <Gradients />
      <TitleBar>
        <ShareStrip />
        <svg width="16" height="18" viewBox="0 0 16 18">
          <rect width="16" height="18" fill="#000" />
          <path d="M1 3l2-2 2 4 2 1 3-3v4l4 2 1 4-3 3-3 2-4-4-1-4-3-3z" fill="#fff" />
          <path d="M8 8l3 2-2 1z" fill="#000" />
        </svg>
        <TitleText>WallShelfWithDoor_OBJ_SubdivLvl0 - Rhinoceros 7 Commercia</TitleText>
        <CaptionButton aria-label="Minimize"><svg width="11" height="11" viewBox="0 0 11 11"><path d="M0 5.500h11" stroke="#000" /></svg></CaptionButton>
        <CaptionButton aria-label="Restore"><svg width="11" height="11" viewBox="0 0 11 11" fill="none" stroke="#000"><path d="M.5 2.500h8v8h-8zM2.500 2.500v-2h8v8h-2" /></svg></CaptionButton>
        <CaptionButton aria-label="Close"><svg width="11" height="11" viewBox="0 0 11 11"><path d="M.5.500l10 10M10.500.500l-10 10" stroke="#000" /></svg></CaptionButton>
      </TitleBar>
      <MenuBar>
        {menus.map((m) => <MenuItem key={m}>{m}</MenuItem>)}
      </MenuBar>

      <CommandArea>
        <CommandText>
          <History>
            <p>Command: _Shade</p>
            <p>Choose Shade settings ( Selected=No&nbsp; DisplayMode=Rendered&nbsp; DrawCurves=No&nbsp; DrawWires=Yes&nbsp; DrawGrid=Yes&nbsp; DrawAxes=Yes ): DrawWires=No</p>
          </History>
          <Prompt>
            <b>Choose Shade settings</b>(&nbsp;
            {options.map(([a, key, b, val]) => (
              <PromptOption key={b}>{a}<u>{key}</u>{b}=<i>{val}</i></PromptOption>
            ))}
            <PromptLabel>):<PromptInput aria-label="Command input" /></PromptLabel>
          </Prompt>
        </CommandText>
        <CommandScroll>
          <ScrollButton aria-label="Scroll up"><svg width="8" height="6" viewBox="0 0 8 6"><path d="M1 5l3-3 3 3" fill="none" stroke="#555" strokeWidth="2" /></svg></ScrollButton>
          <ScrollButton aria-label="Scroll down"><svg width="8" height="6" viewBox="0 0 8 6"><path d="M1 1l3 3 3-3" fill="none" stroke="#555" strokeWidth="2" /></svg></ScrollButton>
          <SpinButton aria-label="Previous"><svg width="6" height="3" viewBox="0 0 6 3"><path d="M0 3l3-3 3 3z" /></svg></SpinButton>
          <SpinButton aria-label="Next"><svg width="6" height="3" viewBox="0 0 6 3"><path d="M0 0h6L3 3z" /></svg></SpinButton>
        </CommandScroll>
      </CommandArea>

      <ToolbarArea>
        <TabStrip>
          {tabs.map((t) => (
            <ToolTab key={t} $active={t === "Display"}>
              {t}
              {t === "Display" && (
                <ActiveTabShape viewBox="0 0 84 22" preserveAspectRatio="none">
                  <path d="M0 22L15.500 3Q17 .500 20 .500h60q3.500 0 3.500 4V22z" fill="#eaebef" />
                  <path d="M0 21.500L15.500 3Q17 .500 20 .500h60q3.500 0 3.500 4V22" fill="none" stroke={LINE} />
                </ActiveTabShape>
              )}
            </ToolTab>
          ))}
          <TabSettings aria-label="Toolbar options"><Gear /></TabSettings>
        </TabStrip>
        <ToolRow>
          {displayIcons.map(([name, art]) => (
            <ToolButton key={name} aria-label={name}><svg width="24" height="24" viewBox="0 0 24 24">{art}</svg></ToolButton>
          ))}
          <ToolDivider />
          {shadeIcons.map(([name, art]) => (
            <ToolButton key={name} aria-label={name}><svg width="24" height="24" viewBox="0 0 24 24">{art}</svg></ToolButton>
          ))}
        </ToolRow>
      </ToolbarArea>

      <Workspace>
        <SideTools>
          <Grip />
          <SideGrid>
            {sideIcons.map(([name, more, art]) => (
              <ToolButton key={name} aria-label={name}>
                <svg width="28" height="28" viewBox="0 0 28 28">
                  {art}
                  {more && <path d="M28 22v6h-6z" fill="#6d6e72" />}
                </svg>
              </ToolButton>
            ))}
          </SideGrid>
        </SideTools>

        <Center>
          <Viewports>
            <Viewport name="Top"><TopScene /></Viewport>
            <Viewport name="Perspective" active><PerspectiveScene /></Viewport>
            <Viewport name="Front"><FrontScene /></Viewport>
            <Viewport name="Right"><RightScene /></Viewport>
          </Viewports>
          <PaneTabs>
            <PaneTab>
              Perspective
              <PaneTabShape viewBox="0 0 80 22" preserveAspectRatio="none">
                <path d="M.5 0v5q0 3 3 8l3 7q1 1.500 3 1.500h67q3 0 3-4V0" fill="none" stroke={LINE} />
              </PaneTabShape>
            </PaneTab>
            <PaneTab>Top</PaneTab>
            <PaneTab>Front</PaneTab>
            <PaneTab>Right</PaneTab>
            <PaneTab aria-label="New viewport">
              <svg width="11" height="11" viewBox="0 0 11 11"><path d="M4 .500h3V4h3.500v3H7v3.500H4V7H.5V4H4z" fill="#fff" stroke="#888" /></svg>
            </PaneTab>
          </PaneTabs>
        </Center>

        <Properties>
          <PanelTitle>Properties: View properties</PanelTitle>
          <PanelTabs>
            {panelTabs.map(([name, art], i) => (
              <PanelTab key={name} $active={i === 0} aria-label={name}>{art}</PanelTab>
            ))}
            <PanelTabEnd><Gear color="#bcc6dc" /></PanelTabEnd>
          </PanelTabs>
          <PanelBody>
            <PageButtons>
              <PageButton $active aria-label="Camera">
                <svg width="24" height="20" viewBox="0 0 24 20">
                  <path d="M1 6l6-1 2-4h7l2 4 5 1v11q0 1-2 1H3q-2 0-2-1z" fill="#2c2c2e" stroke="#111" />
                  <path d="M10 2h5l1 3H9z" fill="#666" />
                  <circle cx="13" cy="11" r="6" fill="#888" stroke="#111" />
                  <circle cx="13" cy="11" r="4" fill="#1b1e22" stroke="#ccc" strokeWidth=".7" />
                  <circle cx="12" cy="10" r="1.500" fill="#7fb09a" />
                </svg>
              </PageButton>
              <PageButton aria-label="Material">
                <svg width="25" height="25" viewBox="0 0 25 25">
                  <ellipse cx="9" cy="22" rx="7" ry="2" fill="#bbb" />
                  <circle cx="20" cy="5" r="4" fill="url(#gBlue)" />
                  <circle cx="15" cy="10" r="5" fill="url(#gBlue)" />
                  <circle cx="8" cy="16" r="6.500" fill="url(#gBlue)" />
                </svg>
              </PageButton>
              <PageButton aria-label="Frame">
                <svg width="27" height="25" viewBox="0 0 27 25">
                  <rect x="1" y="1" width="25" height="23" fill="#a9a9a9" stroke="#555" strokeWidth="2" />
                  <rect x="3" y="3" width="21" height="19" fill="#7cc6ec" />
                  <rect x="5" y="6" width="17" height="13" fill="#fff" stroke="#e86a78" strokeWidth="2" />
                </svg>
              </PageButton>
            </PageButtons>
            {sections.map(([title, rows]) => (
              <React.Fragment key={title}>
                <SectionTitle>{title}</SectionTitle>
                <Rows>
                  {rows.map(([label, value, kind]) => (
                    <PropertyRow key={label} id={`${title}-${label}`.replace(/[ .]/g, "")} label={label} value={value} kind={kind} />
                  ))}
                </Rows>
              </React.Fragment>
            ))}
          </PanelBody>
        </Properties>
      </Workspace>

      <OsnapBar>
        {osnaps.map((o, i) => (
          <Osnap key={o} $wide={o === "Project"}><CheckBox type="checkbox" disabled={i > 10} />{o}</Osnap>
        ))}
      </OsnapBar>
      <StatusBar>
        <StatusCell $w={53}>CPlane</StatusCell>
        <StatusCell $w={95}>x 15.777</StatusCell>
        <StatusCell $w={95}>y 257.794</StatusCell>
        <StatusCell $w={95}>z</StatusCell>
        <StatusCell $w={95}>Millimeters</StatusCell>
        <StatusCell $w={182} $left><Swatch />Layer 01</StatusCell>
        <StatusCell $w={73}>Grid Snap</StatusCell>
        <StatusCell $w={49}>Ortho</StatusCell>
        <StatusCell $w={50}>Planar</StatusCell>
        <StatusCell $w={54}>Osnap</StatusCell>
        <StatusCell $w={80} $on>SmartTrack</StatusCell>
        <StatusCell $w={63}>Gumball</StatusCell>
        <StatusCell $w={102}>Record History</StatusCell>
        <StatusCell $w={43}>Filter</StatusCell>
        <StatusNote>Minutes from last save: 1</StatusNote>
      </StatusBar>
    </Window>
  );
}
